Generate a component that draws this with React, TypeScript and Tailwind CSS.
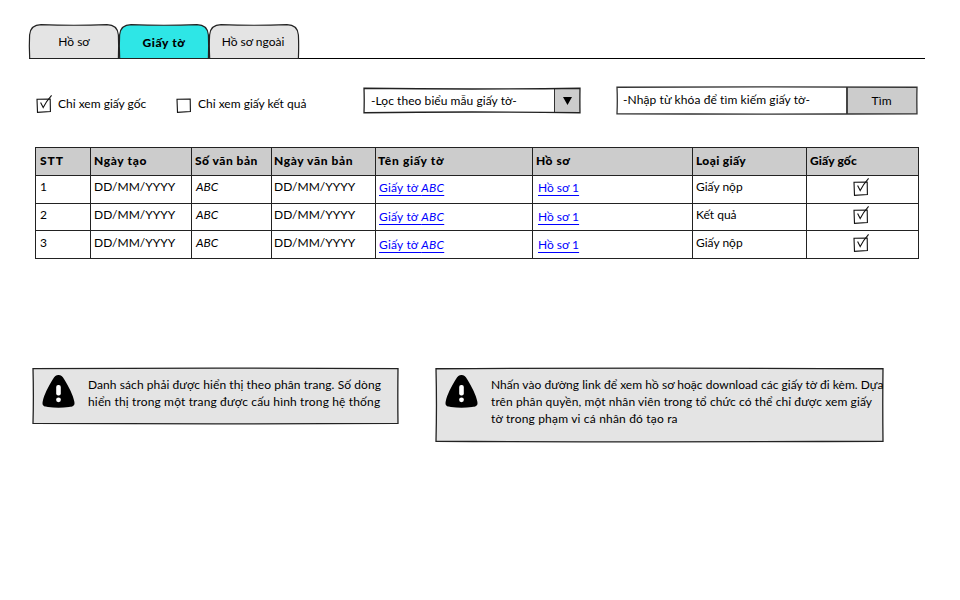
import type { ReactNode } from "react";
import { clsx } from "clsx";

/** Slightly bowed, hand-drawn frame stretched over its positioned parent. */
function Outline({ bend = 1, color = "#222" }: { bend?: number; color?: string }) {
  return (
    <svg
      className="pointer-events-none absolute inset-0 h-full w-full overflow-visible"
      viewBox="0 0 100 100"
      preserveAspectRatio="none"
      fill="none"
      stroke={color}
      strokeWidth="1.3"
    >
      <path
        vectorEffect="non-scaling-stroke"
        d={`M0 1 Q50 ${1 + bend} 100 1 Q99.9 50 100 99 Q50 ${99 - bend} 0 99 Q0.2 50 0 1Z`}
      />
    </svg>
  );
}

function Check({ checked }: { checked?: boolean }) {
  return (
    <svg className="h-[18px] w-4 shrink-0" viewBox="0 0 16 18" fill="none" stroke="#111" strokeWidth="1.1">
      <path d="M1 4.3 L14.2 4 L14.4 16.6 L1.5 17.3Z" />
      {checked && <path d="M4.6 7.5 L7.2 12.6 Q10.5 6 15.6 .4" />}
    </svg>
  );
}

function Tab({ label, active, textClass }: { label: string; active?: boolean; textClass?: string }) {
  return (
    <div className="relative flex h-[35px] w-[90px] items-center justify-center">
      <svg className="absolute inset-0 h-full w-full overflow-visible" viewBox="0 0 90 35" strokeWidth="1.2" stroke="#222">
        <path
          fill={active ? "#2ee6e6" : "#e4e4e4"}
          d="M.7 34.5 Q0 22 .6 11 Q1.5 .8 12 .7 Q45 1.8 78 .7 Q88.5 .8 89.4 11 Q89.9 22 89.4 34.5Z"
        />
      </svg>
      <span className={clsx("relative", textClass)}>{label}</span>
    </div>
  );
}

const columns = [
  { label: "STT", text: "ml-px tracking-[1px]" },
  { label: "Ngày tạo", text: "tracking-[0.65px]" },
  { label: "Số văn bản", text: "tracking-[0.5px]" },
  { label: "Ngày văn bản", text: "-ml-px tracking-[0.6px]" },
  { label: "Tên giấy tờ", text: "-ml-px tracking-[0.7px]" },
  { label: "Hồ sơ", text: "tracking-[0.5px]" },
  { label: "Loại giấy", text: "tracking-[0.35px]" },
  { label: "Giấy gốc", text: "tracking-[0.15px]" },
];
const rows = [
  { kind: "Giấy nộp", pad: "pt-[2px]", linkPad: "pt-[3px]" },
  { kind: "Kết quả", pad: "pt-[2px]", linkPad: "pt-1" },
  { kind: "Giấy nộp", pad: "pt-[3px]", linkPad: "pt-[5px]" },
];

function Cell({ children, className }: { children: ReactNode; className?: string }) {
  return <div className={clsx("border-r border-b border-[#222] pl-[3px]", className)}>{children}</div>;
}

function Note({ children, className }: { children: ReactNode; className: string }) {
  return (
    <div className={clsx("relative flex bg-[#e4e4e4] pt-2 pl-[9px] whitespace-nowrap", className)}>
      <Outline bend={-1.5} />
      <svg className="relative -top-px mr-[13px] h-[33px] w-[33px] shrink-0" viewBox="0 0 33 33">
        <path d="M16.5 0 C19 0 20.5 1.5 22 4 C27 12 31 20 32.3 26.5 C33.2 31 31 31.5 27 32 Q16.5 33.4 6 32 C2 31.5 -.2 31 .7 26.5 C2 20 6 12 11 4 C12.5 1.5 14 0 16.5 0Z" />
        <rect x="14.2" y="10" width="4.6" height="10.5" rx="2" fill="#fff" />
        <circle cx="16.5" cy="24.8" r="2.4" fill="#fff" />
      </svg>
      <div className="relative leading-[17.2px]">{children}</div>
    </div>
  );
}

export default function App() {
  return (
    <div className="h-[600px] w-[960px] overflow-hidden bg-white pt-6 font-['Lato','Noto_Sans',sans-serif] text-[12px] leading-[18px] text-black [font-variant-ligatures:none]">
      <div className="ml-[29px] flex h-[35px] w-[896px] border-b border-black">
        <Tab label="Hồ sơ" />
        <Tab label="Giấy tờ" active textClass="top-px font-black tracking-[0.6px]" />
        <Tab label="Hồ sơ ngoài" textClass="pr-[2px]" />
      </div>

      <div className="mt-[27px] ml-9 flex h-[30px] items-start whitespace-nowrap">
        <div className="flex w-[140px] items-start gap-[6px] pt-[9px]">
          <Check checked />
          <span>Chỉ xem giấy gốc</span>
        </div>
        <div className="flex w-[188px] items-start gap-[6px] pt-[9px]">
          <Check />
          <span>Chỉ xem giấy kết quả</span>
        </div>
        <div className="relative mt-[2px] flex h-[25px] w-[216px] items-center">
          <span className="flex-1 pl-[7px] tracking-[0.06px]">-Lọc theo biểu mẫu giấy tờ-</span>
          <div className="flex h-full w-[26px] items-center justify-center border-l border-[#333] bg-[#ccc]">
            <svg className="h-2 w-[9px]" viewBox="0 0 9 8">
              <path d="M0 0H9L4.5 8Z" />
            </svg>
          </div>
          <Outline bend={6} />
        </div>
        <div className="relative mt-px ml-[37px] flex h-[27px] w-[300px] items-center">
          <span className="flex-1 pb-px pl-[6px] tracking-[0.1px]">-Nhập từ khóa để tìm kiếm giấy tờ-</span>
          <div className="flex h-full w-[71px] items-center justify-center border-l-2 border-[#444] bg-[#ccc] pr-[2px] pt-px">
            Tìm
          </div>
          <Outline bend={-3} color="#333" />
        </div>
      </div>

      <div className="mt-[31px] ml-[35px] grid w-[884px] grid-cols-[55px_101px_80px_104px_157px_160px_114px_112px] grid-rows-[28px_28px_27px_28px] border-t border-l border-[#222] whitespace-nowrap">
        {columns.map((c) => (
          <Cell key={c.label} className="bg-[#ccc] pt-1 font-black">
            <span className={c.text}>{c.label}</span>
          </Cell>
        ))}
        {rows.map(({ kind, pad, linkPad }, i) => (
          <div key={i} className="contents">
            <Cell className={pad}>
              <span className="ml-px">{i + 1}</span>
            </Cell>
            <Cell className={pad}>DD/MM/YYYY</Cell>
            <Cell className={clsx(pad, "italic")}>
              <span className="ml-px">ABC</span>
            </Cell>
            <Cell className={pad}>
              <span className="-ml-px">DD/MM/YYYY</span>
            </Cell>
            <Cell className={clsx(linkPad, "text-[#00f]")}>
              <span className="underline underline-offset-[3px] tracking-[0.2px]">
                Giấy tờ <i>ABC</i>
              </span>
            </Cell>
            <Cell className={clsx(linkPad, "text-[#00f]")}>
              <span className="ml-[2px] underline underline-offset-[3px]">Hồ sơ 1</span>
            </Cell>
            <Cell className={pad}>{kind}</Cell>
            <Cell className={clsx(pad, "flex justify-center pr-[7px]")}>
              <Check checked />
            </Cell>
          </div>
        ))}
      </div>

      <div className="mt-[109px] ml-[33px] flex items-start">
        <Note className="h-[56px] w-[365px]">
          <p className="tracking-[0.075px]">Danh sách phải được hiển thị theo phân trang. Số dòng</p>
          <p className="tracking-[0.15px]">hiển thị trong một trang được cấu hình trong hệ thống</p>
        </Note>
        <Note className="ml-[38px] h-[74px] w-[447px]">
          <p className="tracking-[0.03px]">Nhấn vào đường link để xem hồ sơ hoặc download các giấy tờ đi kèm. Dựa</p>
          <p className="tracking-[0.09px]">trên phân quyền, một nhân viên trong tổ chức có thể chỉ được xem giấy</p>
          <p className="tracking-[0.18px]">tờ trong phạm vi cá nhân đó tạo ra</p>
        </Note>
      </div>
    </div>
  );
}
